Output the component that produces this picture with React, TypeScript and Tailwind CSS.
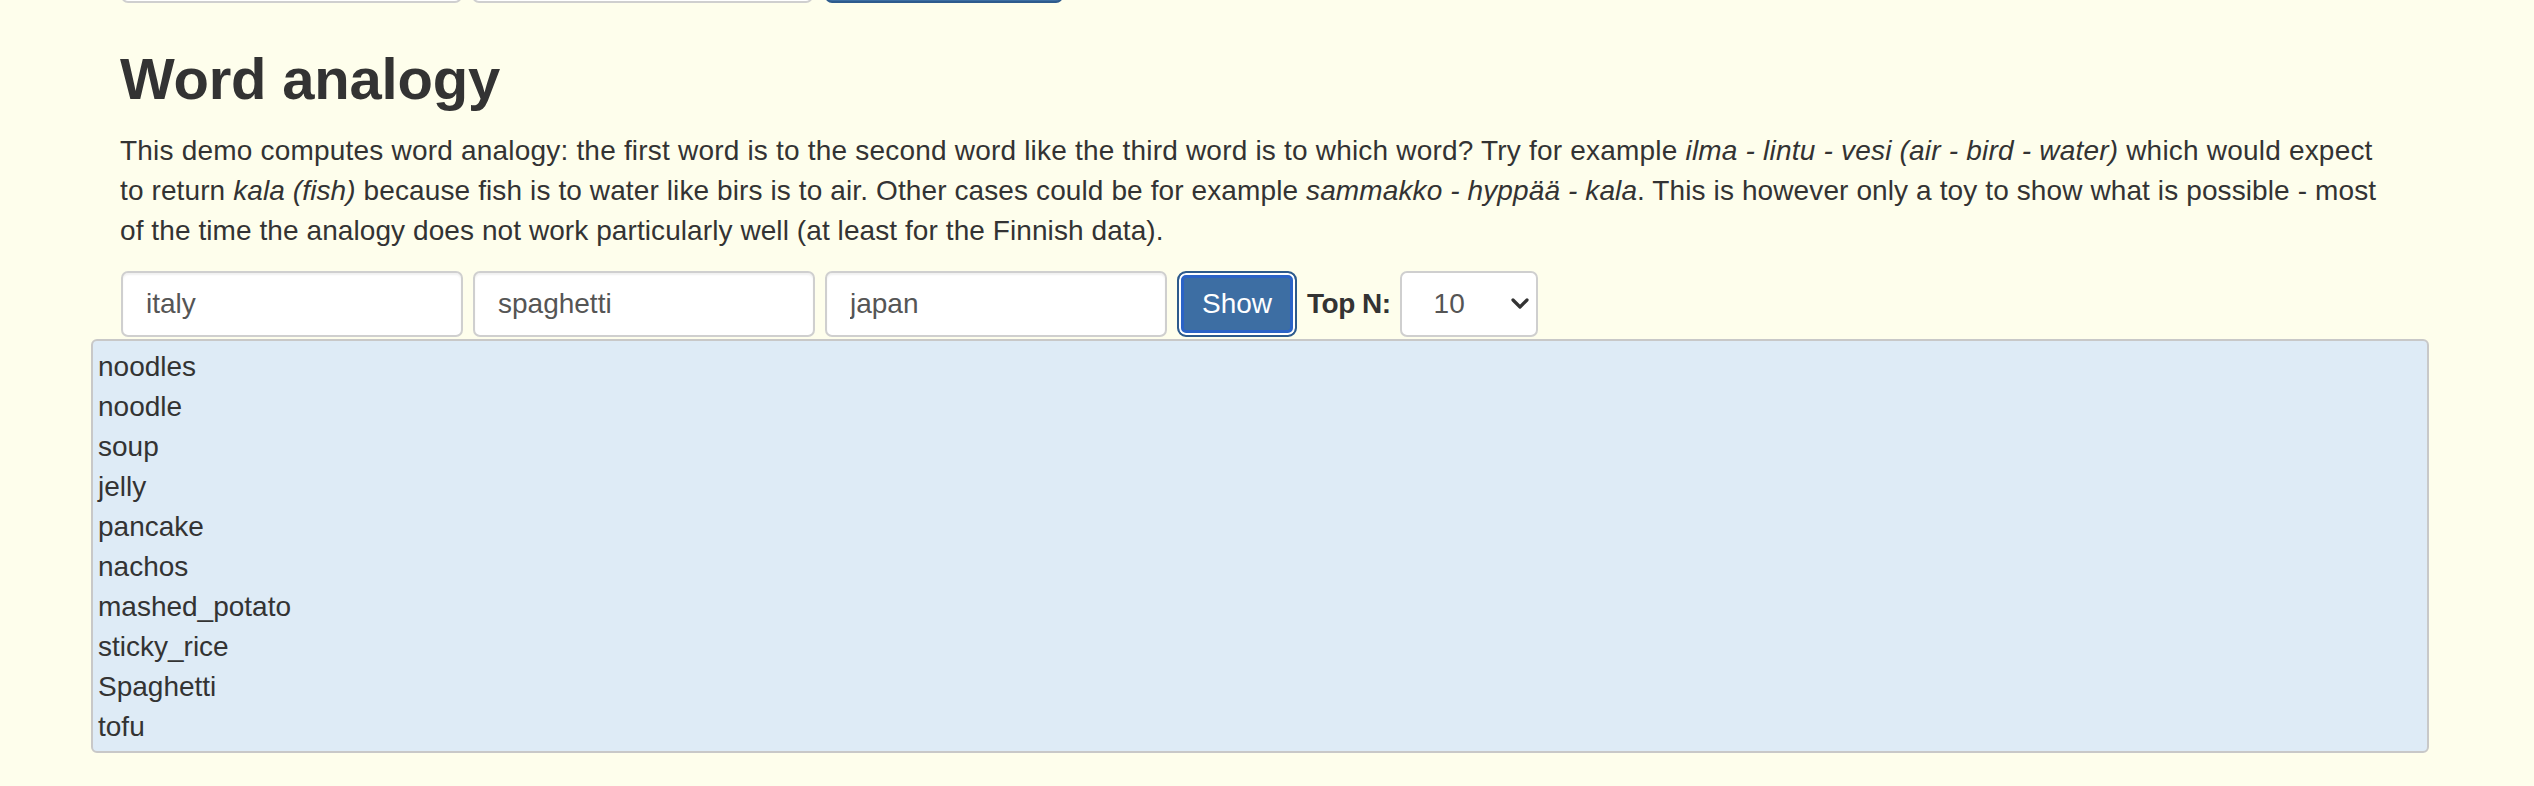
import React from 'react';

const results = [
  'noodles',
  'noodle',
  'soup',
  'jelly',
  'pancake',
  'nachos',
  'mashed_potato',
  'sticky_rice',
  'Spaghetti',
  'tofu',
];

const inputCls =
  'h-[66px] w-[342px] rounded-[7px] border-2 border-[#cfcfcf] bg-white pl-[23px] text-[28px] text-[#555] shadow-[inset_0_2px_2px_rgba(0,0,0,0.06)] outline-none';

function Chevron() {
  return (
    <svg width="20" height="14" viewBox="0 0 20 14" className="ml-auto mr-[6px]">
      <path d="M3 3 L10 10 L17 3" fill="none" stroke="#333" strokeWidth="3.2" strokeLinecap="round" strokeLinejoin="round" />
    </svg>
  );
}

export default function App() {
  return (
    <div className="min-h-screen overflow-hidden bg-[#fefeec] font-['Liberation_Sans',Arial,sans-serif] text-[#333]">
      <div className="pl-[121px]">
        {/* previous form, mostly scrolled away */}
        <div className="mt-[-63px] flex gap-[10px]">
          <div className="h-[66px] w-[341px] rounded-[7px] border-2 border-[#cfcfcf] bg-white" />
          <div className="h-[66px] w-[341px] rounded-[7px] border-2 border-[#cfcfcf] bg-white" />
          <div className="ml-[2px] h-[66px] w-[238px] rounded-[7px] border-2 border-[#2e5b8d] bg-[#3d6ea3]" />
        </div>
      </div>

      <div className="w-[2400px] pl-[120px]">
        <h1 className="mt-[44px] text-[58px] font-bold leading-[64px] tracking-[-0.2px]">Word analogy</h1>
        {/* lines broken as in the original render */}
        <p className="mt-[20px] whitespace-nowrap text-[28px] leading-[40px]">
          <span className="tracking-[0.2px]">
            This demo computes word analogy: the first word is to the second word like the third word is to which word? Try for
            example <i>ilma - lintu - vesi (air - bird - water)</i> which would expect
          </span>
          <br />
          <span className="tracking-[0.11px]">
            to return <i>kala (fish)</i> because fish is to water like birs is to air. Other cases could be for example{' '}
            <i>sammakko - hyppää - kala</i>. This is however only a toy to show what is possible - most
          </span>
          <br />
          <span className="tracking-[0.08px]">
            of the time the analogy does not work particularly well (at least for the Finnish data).
          </span>
        </p>

        <div className="mt-[20px] flex items-center pl-[1px]">
          <input className={inputCls} defaultValue="italy" />
          <input className={`${inputCls} ml-[10px]`} defaultValue="spaghetti" />
          <input className={`${inputCls} ml-[10px]`} defaultValue="japan" />
          <button className="ml-[10px] h-[66px] w-[120px] rounded-[9px] border-2 border-[#2d5a8c] bg-[#3d6ea3] text-[28px] text-white shadow-[inset_0_0_0_2px_#ffffff,inset_0_0_0_5px_#2b63c6]">
            Show
          </button>
          <span className="ml-[10px] text-[28px] font-bold tracking-[-0.5px]">Top N:</span>
          <div className="ml-[9px] flex h-[66px] w-[138px] items-center rounded-[7px] border-2 border-[#cfcfcf] bg-white pl-[32px] text-[28px] text-[#555]">
            10
            <Chevron />
          </div>
        </div>
      </div>

      <div className="ml-[91px] mt-[2px] w-[2338px] rounded-[6px] border-2 border-[#c8c8c8] bg-[#deebf6] pb-[4px] pl-[5px] pt-[6px]">
        {results.map((r) => (
          <div key={r} className="text-[28px] leading-[40px]">
            {r}
          </div>
        ))}
      </div>
    </div>
  );
}
